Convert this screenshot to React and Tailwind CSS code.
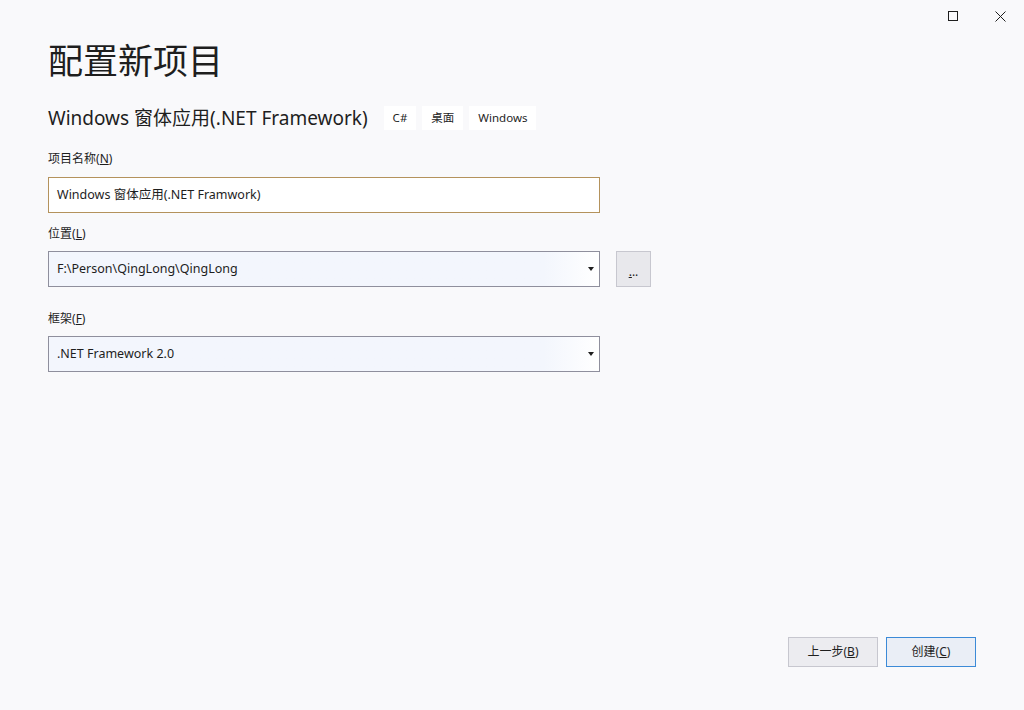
import React from 'react';

const font = { fontFamily: '"Noto Sans", "Noto Sans CJK SC", sans-serif' };

const Tag = ({ children }) => (
    <span className="h-[24px] px-[9px] flex items-center bg-white text-[11.5px] text-[#1e1e1e]">{children}</span>
);

const Label = ({ text, hot }) => (
    <div className="text-[12px] text-[#1e1e1e] leading-[16px]">
        {text}(<span className="underline">{hot}</span>)
    </div>
);

const Combo = ({ value }) => (
    <div className="w-[552px] h-[36px] border border-[#8f8f9d] bg-gradient-to-r from-[#f3f6fd] from-90% to-white flex items-center justify-between pl-[8px] pr-[4px]">
        <span className="text-[12.5px] text-[#1e1e1e]">{value}</span>
        <svg width="8" height="4" viewBox="0 0 8 4"><path d="M1 0h6L4 4z" fill="#1e1e1e" /></svg>
    </div>
);

export default function App() {
    return (
        <div className="w-[1024px] h-[710px] bg-[#f9f9fb] flex flex-col relative" style={font}>
            <div className="flex justify-end h-[32px] shrink-0">
                <button className="w-[46px] h-[32px] flex items-center justify-center">
                    <svg width="10" height="10" viewBox="0 0 10 10"><rect x="0.5" y="0.5" width="9" height="9" fill="none" stroke="#1e1e1e" /></svg>
                </button>
                <button className="w-[48px] h-[32px] flex items-center justify-center">
                    <svg width="11" height="11" viewBox="0 0 11 11"><path d="M0.5 0.5l10 10M10.5 0.5l-10 10" stroke="#1e1e1e" /></svg>
                </button>
            </div>

            <div className="pl-[48px] flex flex-col">
                <h1 className="text-[35px] leading-[44px] text-[#1e1e1e] mt-[7px]">配置新项目</h1>

                <div className="flex items-center mt-[21px] h-[28px]">
                    <span className="text-[19px] text-[#1e1e1e] mr-[16px]">Windows 窗体应用(.NET Framework)</span>
                    <div className="flex gap-[6px]">
                        <Tag>C#</Tag>
                        <Tag>桌面</Tag>
                        <Tag>Windows</Tag>
                    </div>
                </div>

                <div className="mt-[19px]">
                    <Label text="项目名称" hot="N" />
                </div>
                <div className="mt-[10px] w-[552px] h-[36px] border border-[#b4925c] bg-white flex items-center pl-[8px] text-[12.5px] text-[#1e1e1e]">
                    Windows 窗体应用(.NET Framwork)
                </div>

                <div className="mt-[13px]">
                    <Label text="位置" hot="L" />
                </div>
                <div className="mt-[9px] flex gap-[16px]">
                    <Combo value="F:\Person\QingLong\QingLong" />
                    <button className="w-[35px] h-[36px] border border-[#c7c7cf] bg-[#e8e8ec] text-[12px] text-[#1e1e1e] flex items-end justify-center pb-[9px]">
                        <span className="leading-[10px]"><span className="underline">.</span>..</span>
                    </button>
                </div>

                <div className="mt-[24px]">
                    <Label text="框架" hot="F" />
                </div>
                <div className="mt-[9px]">
                    <Combo value=".NET Framework 2.0" />
                </div>
            </div>

            <div className="mt-auto mb-[43px] flex justify-end gap-[8px] pr-[48px]">
                <button className="w-[90px] h-[30px] border border-[#c7c7cf] bg-[#ececf0] text-[12px] text-[#1e1e1e]">
                    上一步(<span className="underline">B</span>)
                </button>
                <button className="w-[90px] h-[30px] border border-[#3c8ad7] bg-[#eaeef6] text-[12px] text-[#1e1e1e]">
                    创建(<span className="underline">C</span>)
                </button>
            </div>
        </div>
    );
}
